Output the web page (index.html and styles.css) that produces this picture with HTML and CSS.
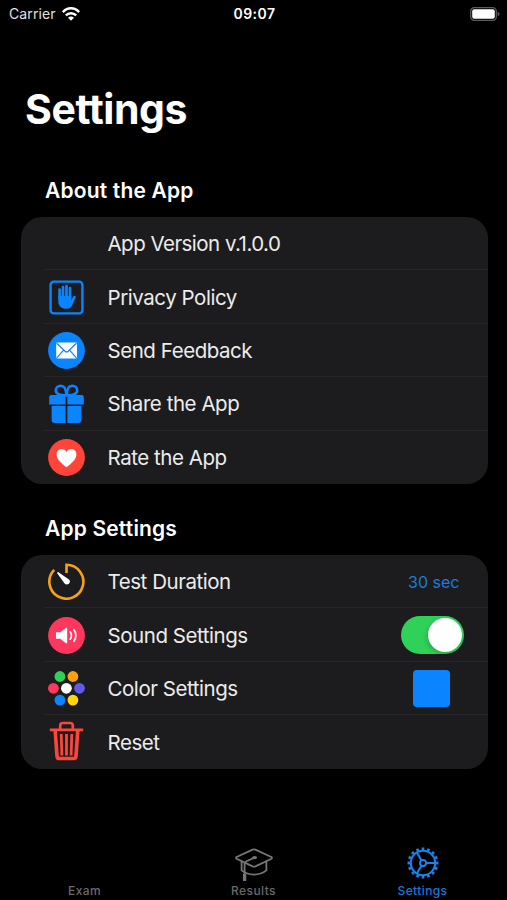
FILE: index.html
```html
<!DOCTYPE html>
<html lang="en">
<head>
  <meta charset="UTF-8">
  <meta name="viewport" content="width=device-width, initial-scale=1.0">
  <title>Settings</title>
  <link rel="stylesheet" href="styles.css">
</head>
<body>
  <div class="screen">
    <header class="status-bar">
      <div class="carrier">
        <span>Carrier</span>
        <svg class="wifi" viewBox="0 0 18 14" fill="none" stroke="#fff" stroke-width="2.5">
          <path d="M.8 5.1 C5.5 .1 12.5 .1 17.2 5.1"/>
          <path d="M3.8 8.4 C6.8 5.4 11.2 5.4 14.2 8.4"/>
          <path d="M9 13.8 L6 10.8 C7.7 9.2 10.3 9.2 12 10.8 Z" fill="#fff" stroke="none"/>
        </svg>
      </div>
      <div class="clock">09:07</div>
      <svg class="battery" viewBox="0 0 30 14">
        <rect x=".7" y=".7" width="25.6" height="12.6" rx="3.6" fill="none" stroke="#5c5c5e" stroke-width="1.3"/>
        <rect x="2.2" y="2.2" width="22.6" height="9.6" rx="2" fill="#fff"/>
        <path d="M27.6 4.8 C30.2 5.6 30.2 8.4 27.6 9.2 Z" fill="#5c5c5e"/>
      </svg>
    </header>

    <main>
      <h1>Settings</h1>

      <h2>About the App</h2>
      <ul class="card">
        <li class="row">
          <span class="icon"></span>
          <span class="label version">App Version v.1.0.0</span>
        </li>
        <li class="row">
          <svg class="icon" viewBox="0 0 37 37">
            <rect x="2.6" y="2.6" width="31.8" height="31.8" rx="3.2" fill="none" stroke="#0a84ff" stroke-width="2.4"/>
            <g fill="none" stroke="#0a84ff" stroke-width="2.7" stroke-linecap="round">
              <path d="M11.6 19 V10.6"/>
              <path d="M15 18 V8"/>
              <path d="M18.5 18 V7"/>
              <path d="M22 18 V9"/>
            </g>
            <path d="M10.3 17 H23.3 V21.2 L25.2 17.4 C26.2 16 28.2 16.6 27.6 18.4 L24.8 25 C23.4 28.4 21.4 29.8 18.2 29.8 C13.2 29.8 10.3 26.8 10.3 22 Z" fill="#0a84ff"/>
          </svg>
          <span class="label">Privacy Policy</span>
        </li>
        <li class="row">
          <svg class="icon" viewBox="0 0 37 37">
            <circle cx="18.5" cy="18.5" r="18.4" fill="#0a84ff"/>
            <rect x="8.2" y="10.6" width="20.8" height="15.8" rx="1.2" fill="#fff"/>
            <path d="M8.8 11.2 L17 19.2 Q18.6 20.6 20.2 19.2 L28.4 11.2 M8.8 25.8 L15.6 18.2 M28.4 25.8 L21.6 18.2" fill="none" stroke="#0a84ff" stroke-width="1.2"/>
          </svg>
          <span class="label">Send Feedback</span>
        </li>
        <li class="row">
          <svg class="icon gift" viewBox="0 0 37 40">
            <g fill="none" stroke="#0a84ff" stroke-width="2.6">
              <path d="M18.2 11.2 C12 11.6 7.8 9.8 7.8 6.4 C7.8 3.6 10 1.7 12.8 1.7 C16.6 1.7 18.2 5 18.2 11.2 Z"/>
              <path d="M18.8 11.2 C25 11.6 29.2 9.8 29.2 6.4 C29.2 3.6 27 1.7 24.2 1.7 C20.4 1.7 18.8 5 18.8 11.2 Z"/>
            </g>
            <g fill="#0a84ff">
              <path d="M3.2 11 H17.6 V20.4 H1.2 V13 Q1.2 11 3.2 11 Z"/>
              <path d="M19.4 11 H33.8 Q35.8 11 35.8 13 V20.4 H19.4 Z"/>
              <path d="M3.6 22 H17.6 V39 H7 Q3.6 39 3.6 35.7 Z"/>
              <path d="M19.4 22 H33.4 V35.7 Q33.4 39 30 39 H19.4 Z"/>
            </g>
          </svg>
          <span class="label">Share the App</span>
        </li>
        <li class="row">
          <svg class="icon" viewBox="0 0 37 37">
            <circle cx="18.5" cy="18.5" r="18.4" fill="#ff453a"/>
            <path d="M18.5 28.2 C13 24 8.6 20 8.6 15.4 C8.6 12.2 10.8 10 13.6 10 C15.8 10 17.6 11.2 18.5 13.2 C19.4 11.2 21.2 10 23.4 10 C26.2 10 28.4 12.2 28.4 15.4 C28.4 20 24 24 18.5 28.2 Z" fill="#fff"/>
          </svg>
          <span class="label">Rate the App</span>
        </li>
      </ul>

      <h2>App Settings</h2>
      <ul class="card">
        <li class="row">
          <svg class="icon" viewBox="0 0 37 37">
            <path d="M18.5 10 V1.7 A17 17 0 1 1 6.2 6.8" fill="none" stroke="#f5a11a" stroke-width="2.6"/>
            <path d="M10.4 9.2 C9.8 8.8 8.9 9.6 9.4 10.4 L16.6 20.4 C19.4 23.2 23.8 19.4 21 16.4 Z" fill="#fff"/>
          </svg>
          <span class="label">Test Duration</span>
          <span class="duration">30 sec</span>
        </li>
        <li class="row">
          <svg class="icon" viewBox="0 0 37 37">
            <circle cx="18.5" cy="18.5" r="18.4" fill="#ff375f"/>
            <path d="M8 15.2 H12.4 L17.6 11 C18.4 10.4 19.2 10.6 19.2 11.6 V25.4 C19.2 26.4 18.4 26.6 17.6 26 L12.4 21.8 H8 Z" fill="#fff"/>
            <path d="M22.2 14.8 Q24.8 18.5 22.2 22.2 M25.8 12.6 Q30 18.5 25.8 24.4" fill="none" stroke="#fff" stroke-width="1.7" stroke-linecap="round"/>
          </svg>
          <span class="label">Sound Settings</span>
          <span class="toggle"><span class="knob"></span></span>
        </li>
        <li class="row">
          <svg class="icon" viewBox="0 0 37 37">
            <circle cx="11.9" cy="6.5" r="5.4" fill="#30d158"/>
            <circle cx="24.9" cy="6.5" r="5.4" fill="#ff9f0a"/>
            <circle cx="5.4" cy="18.3" r="5.4" fill="#ff375f"/>
            <circle cx="18.4" cy="18.3" r="5.4" fill="#fff"/>
            <circle cx="31.5" cy="18.3" r="5.4" fill="#5e5ce6"/>
            <circle cx="11.9" cy="30.1" r="5.4" fill="#0a84ff"/>
            <circle cx="24.9" cy="30.1" r="5.4" fill="#ffd60a"/>
          </svg>
          <span class="label">Color Settings</span>
          <span class="swatch"></span>
        </li>
        <li class="row last">
          <svg class="icon trash" viewBox="0 0 37 40" fill="none" stroke="#ff453a">
            <path d="M12.2 8.5 V4.8 Q12.2 2 15 2 H22 Q24.8 2 24.8 4.8 V8.5" stroke-width="2.7"/>
            <path d="M1.8 8.8 H35.2" stroke-width="2.8"/>
            <path d="M7.2 9.6 L9 35 Q9.2 37.5 11.4 37.5 H25.6 Q27.8 37.5 28 35 L29.8 9.6" stroke-width="3.6"/>
            <path d="M13.2 13 L13.9 34.5 M18.5 13 V34.5 M23.8 13 L23.1 34.5" stroke-width="2.8"/>
          </svg>
          <span class="label">Reset</span>
        </li>
      </ul>
    </main>

    <nav class="tab-bar">
      <div class="tab">
        <span>Exam</span>
      </div>
      <div class="tab">
        <svg class="cap" viewBox="0 0 40 36" fill="none" stroke="#77777a" stroke-width="1.8" stroke-linejoin="round" stroke-linecap="round">
          <path d="M18.6 2.6 Q20 2 21.4 2.6 L37.4 10 Q38.6 10.9 37.4 11.7 L21.4 19.4 Q20 20 18.6 19.4 L2.6 11.7 Q1.4 10.9 2.6 10 Z"/>
          <path d="M7.6 14.4 V23.4 Q13 27.6 20 27.6 Q27 27.6 32.4 23.4 V14.4"/>
          <path d="M20.5 10.6 L12.5 14.2 Q10.6 15.2 10.6 17 V32"/>
          <ellipse cx="20.6" cy="10.6" rx="1.6" ry=".8"/>
          <path d="M10.6 27 V34" stroke-width="3.4" stroke-linecap="butt"/>
        </svg>
        <span>Results</span>
      </div>
      <div class="tab active">
        <svg class="gear" viewBox="0 0 32 32" fill="none" stroke="#1784ef">
          <circle cx="16" cy="16" r="12.2" stroke-width="2.1"/>
          <circle cx="16" cy="16" r="14.2" stroke-width="2.6" pathLength="80" stroke-dasharray="2.4 2.6" stroke-dashoffset="1.2"/>
          <circle cx="16" cy="16" r="3" stroke-width="1.9"/>
          <path d="M19 16 H28 M14.5 13.4 L9.9 5.4 M14.5 18.6 L9.9 26.6" stroke-width="2"/>
        </svg>
        <span>Settings</span>
      </div>
    </nav>
  </div>
</body>
</html>
```
FILE: styles.css
```css
* {
  box-sizing: border-box;
}

body {
  margin: 0;
  background: #000;
  color: #fff;
  font-family: Inter, "Liberation Sans", sans-serif;
}

.screen {
  display: flex;
  flex-direction: column;
  width: 507px;
  height: 900px;
  overflow: hidden;
}

.status-bar {
  display: grid;
  grid-template-columns: 1fr auto 1fr;
  align-items: center;
  height: 27px;
  padding: 0 7px 0 9px;
  font-size: 14px;
}

.carrier {
  display: flex;
  align-items: center;
  gap: 6px;
  color: #e0e0e0;
  letter-spacing: 0.1px;
}

.wifi {
  width: 18px;
  height: 14px;
}

.clock {
  font-weight: 600;
  letter-spacing: 0.5px;
}

.battery {
  width: 30px;
  height: 14px;
  justify-self: end;
}

main {
  flex: 1;
}

h1 {
  margin: 57px 0 0 25px;
  font-size: 41px;
  line-height: 50px;
  font-weight: 700;
  letter-spacing: -0.4px;
}

h2 {
  margin: 43px 0 0 45px;
  font-size: 21px;
  line-height: 28px;
  font-weight: 600;
  letter-spacing: 0.17px;
}

.card {
  width: 467px;
  margin: 12px 0 0 20.5px;
  padding: 0 0 0 23px;
  list-style: none;
  background: #1c1c1e;
  border-radius: 21px;
}

.card + h2 {
  margin-top: 31px;
}

.row {
  display: flex;
  align-items: center;
  height: 53.4px;
  padding: 1px 24px 0 4px;
  border-bottom: 1px solid #272729;
}

.last,
.row:last-child {
  border-bottom: none;
}

.icon {
  width: 37px;
  height: 37px;
  margin-right: 23px;
  flex-shrink: 0;
}

.gift,
.trash {
  height: 40px;
}

.trash {
  margin-top: -3px;
}

.label {
  flex: 1;
  font-size: 20.5px;
  letter-spacing: -0.45px;
  color: #ececec;
}

.version {
  letter-spacing: -0.53px;
}

.duration {
  margin-right: 4px;
  font-size: 16px;
  color: #1c7cd6;
}

.toggle {
  display: flex;
  justify-content: flex-end;
  width: 63px;
  height: 38px;
  padding: 2px;
  border-radius: 19px;
  background: #30d158;
}

.knob {
  width: 34px;
  height: 34px;
  border-radius: 50%;
  background: #fff;
  box-shadow: -1px 2px 5px rgba(0, 0, 0, 0.2);
}

.swatch {
  width: 37px;
  height: 37px;
  margin-right: 14px;
  border-radius: 4px;
  background: #0a84ff;
}

.tab-bar {
  display: flex;
  height: 60px;
}

.tab {
  display: flex;
  flex: 1;
  flex-direction: column;
  align-items: center;
  justify-content: flex-end;
  padding-bottom: 1px;
  font-size: 12px;
  line-height: 16px;
  font-weight: 500;
  letter-spacing: 0.4px;
  color: #69696b;
}

.active {
  color: #1479dc;
}

.cap {
  width: 40px;
  height: 36px;
}

.gear {
  width: 32px;
  height: 32px;
  margin-bottom: 4px;
}
```
